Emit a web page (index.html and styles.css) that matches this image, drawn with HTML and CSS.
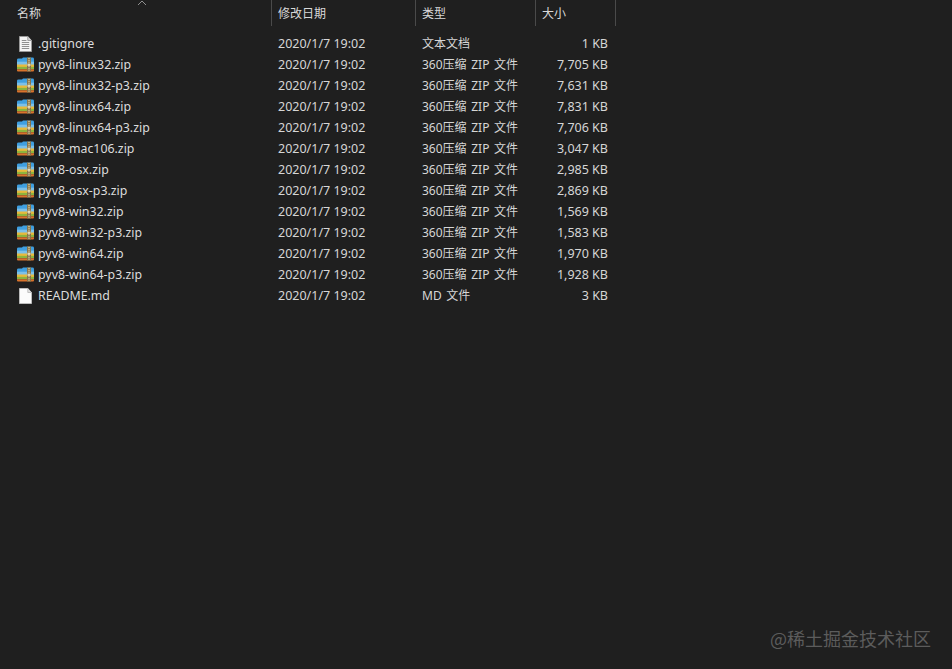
FILE: index.html
```html
<!DOCTYPE html>
<html lang="zh-CN">
<head>
<meta charset="utf-8">
<title>pyv8</title>
<link rel="stylesheet" href="styles.css">
</head>
<body>
<svg width="0" height="0" class="defs">
  <defs>
    <symbol id="zip" viewBox="0 0 17 16" preserveAspectRatio="none">
      <path d="M0 3 Q0 1.500 1.500 1.500 L5 1.500 L6 0.500 L15.500 0.500 Q17 0.500 17 2 L17 6 L0 6Z" fill="#3f9fe0"/>
      <rect x="0" y="5" width="17" height="4" fill="#7cc0e8"/>
      <rect x="0" y="8" width="17" height="3" fill="#e8b93c"/>
      <rect x="0" y="10.500" width="17" height="2.500" fill="#8db43e"/>
      <path d="M0 13 L17 13 L17 14.500 Q17 15.500 16 15.500 L1 15.500 Q0 15.500 0 14.500Z" fill="#d9732c"/>
      <rect x="10" y="0.500" width="4" height="15" fill="#85734a"/>
      <path d="M11 1.500h2M11 3.500h2M11 5.500h2M11 10h2M11 12h2M11 14h2" stroke="#c9b98a" stroke-width="1"/>
      <rect x="10.500" y="7" width="3" height="2.500" fill="#e7dcb8"/>
    </symbol>
    <symbol id="txt" viewBox="0 0 14 16" preserveAspectRatio="none">
      <path d="M0.500 0.500 H9.500 L13.500 4.500 V15.500 H0.500Z" fill="#f4f4f4" stroke="#9a9a9a"/>
      <path d="M9.500 0.500 V4.500 H13.500" fill="#d8d8d8" stroke="#9a9a9a"/>
      <path d="M3 4.500h5M3 6.500h8M3 8.500h8M3 10.500h8M3 12.500h8" stroke="#8a8a8a" stroke-width="1"/>
    </symbol>
    <symbol id="md" viewBox="0 0 14 16" preserveAspectRatio="none">
      <path d="M0.500 0.500 H9.500 L13.500 4.500 V15.500 H0.500Z" fill="#fbfbfb" stroke="#bdbdbd"/>
      <path d="M9.500 0.500 V4.500 H13.500" fill="#e2e2e2" stroke="#bdbdbd"/>
    </symbol>
  </defs>
</svg>
<div class="explorer">
  <div class="header">
    <svg class="sort" width="10" height="5" viewBox="0 0 10 5"><path d="M1 5 L5 1 L9 5" fill="none" stroke="#8f8f8f" stroke-width="1"/></svg>
    <div class="hcell c-name">名称</div>
    <div class="hcell c-date">修改日期</div>
    <div class="hcell c-type">类型</div>
    <div class="hcell c-size">大小</div>
  </div>
  <div class="list">
    <div class="row"><div class="c-name name"><span class="iconbox"><svg class="ico-doc" width="13" height="16"><use href="#txt"/></svg></span>.gitignore</div><div class="c-date">2020/1/7 19:02</div><div class="c-type">文本文档</div><div class="c-size num">1 KB</div></div>
    <div class="row"><div class="c-name name"><span class="iconbox"><svg width="17" height="15"><use href="#zip"/></svg></span>pyv8-linux32.zip</div><div class="c-date">2020/1/7 19:02</div><div class="c-type">360压缩 ZIP 文件</div><div class="c-size num">7,705 KB</div></div>
    <div class="row"><div class="c-name name"><span class="iconbox"><svg width="17" height="15"><use href="#zip"/></svg></span>pyv8-linux32-p3.zip</div><div class="c-date">2020/1/7 19:02</div><div class="c-type">360压缩 ZIP 文件</div><div class="c-size num">7,631 KB</div></div>
    <div class="row"><div class="c-name name"><span class="iconbox"><svg width="17" height="15"><use href="#zip"/></svg></span>pyv8-linux64.zip</div><div class="c-date">2020/1/7 19:02</div><div class="c-type">360压缩 ZIP 文件</div><div class="c-size num">7,831 KB</div></div>
    <div class="row"><div class="c-name name"><span class="iconbox"><svg width="17" height="15"><use href="#zip"/></svg></span>pyv8-linux64-p3.zip</div><div class="c-date">2020/1/7 19:02</div><div class="c-type">360压缩 ZIP 文件</div><div class="c-size num">7,706 KB</div></div>
    <div class="row"><div class="c-name name"><span class="iconbox"><svg width="17" height="15"><use href="#zip"/></svg></span>pyv8-mac106.zip</div><div class="c-date">2020/1/7 19:02</div><div class="c-type">360压缩 ZIP 文件</div><div class="c-size num">3,047 KB</div></div>
    <div class="row"><div class="c-name name"><span class="iconbox"><svg width="17" height="15"><use href="#zip"/></svg></span>pyv8-osx.zip</div><div class="c-date">2020/1/7 19:02</div><div class="c-type">360压缩 ZIP 文件</div><div class="c-size num">2,985 KB</div></div>
    <div class="row"><div class="c-name name"><span class="iconbox"><svg width="17" height="15"><use href="#zip"/></svg></span>pyv8-osx-p3.zip</div><div class="c-date">2020/1/7 19:02</div><div class="c-type">360压缩 ZIP 文件</div><div class="c-size num">2,869 KB</div></div>
    <div class="row"><div class="c-name name"><span class="iconbox"><svg width="17" height="15"><use href="#zip"/></svg></span>pyv8-win32.zip</div><div class="c-date">2020/1/7 19:02</div><div class="c-type">360压缩 ZIP 文件</div><div class="c-size num">1,569 KB</div></div>
    <div class="row"><div class="c-name name"><span class="iconbox"><svg width="17" height="15"><use href="#zip"/></svg></span>pyv8-win32-p3.zip</div><div class="c-date">2020/1/7 19:02</div><div class="c-type">360压缩 ZIP 文件</div><div class="c-size num">1,583 KB</div></div>
    <div class="row"><div class="c-name name"><span class="iconbox"><svg width="17" height="15"><use href="#zip"/></svg></span>pyv8-win64.zip</div><div class="c-date">2020/1/7 19:02</div><div class="c-type">360压缩 ZIP 文件</div><div class="c-size num">1,970 KB</div></div>
    <div class="row"><div class="c-name name"><span class="iconbox"><svg width="17" height="15"><use href="#zip"/></svg></span>pyv8-win64-p3.zip</div><div class="c-date">2020/1/7 19:02</div><div class="c-type">360压缩 ZIP 文件</div><div class="c-size num">1,928 KB</div></div>
    <div class="row"><div class="c-name name"><span class="iconbox"><svg class="ico-doc" width="13" height="16"><use href="#md"/></svg></span>README.md</div><div class="c-date">2020/1/7 19:02</div><div class="c-type">MD 文件</div><div class="c-size num">3 KB</div></div>
  </div>
</div>
<div class="watermark">@稀土掘金技术社区</div>
</body>
</html>
```
FILE: styles.css
```css
html, body {
  margin: 0;
  height: 100%;
  background: #1f1f1f;
  overflow: hidden;
}
body {
  position: relative;
  font-family: "Noto Sans", "Noto Sans CJK SC", sans-serif;
  font-size: 12.5px;
  color: #d6d6d6;
}
.defs { position: absolute; }
.explorer { width: 616px; }
.header {
  position: relative;
  display: flex;
  height: 26px;
  font-size: 12px;
  color: #d9d9d9;
}
.sort { position: absolute; left: 137px; top: 0; }
.hcell {
  display: flex;
  align-items: center;
  box-sizing: border-box;
  border-right: 1px solid #4a4a4a;
}
.c-name { width: 272px; box-sizing: border-box; }
.c-date { width: 144px; box-sizing: border-box; padding-left: 6px; }
.c-type { width: 120px; box-sizing: border-box; padding-left: 6px; font-size: 12px; word-spacing: 1.5px; }
.c-size { width: 80px; box-sizing: border-box; padding-left: 6px; }
.hcell.c-name { padding-left: 17px; }
.list { padding-top: 7px; }
.row {
  display: flex;
  align-items: center;
  height: 21px;
  line-height: 16px;
  white-space: nowrap;
}
.name { display: flex; align-items: center; color: #dcdcdc; font-size: 12.35px; }
.iconbox {
  display: flex;
  justify-content: center;
  width: 17px;
  margin-left: 17px;
  margin-right: 4px;
}
.num { text-align: right; padding-right: 8px; }
.watermark {
  position: absolute;
  right: 21px;
  bottom: 20px;
  font-size: 18px;
  line-height: 22px;
  color: #5c5c5c;
  font-family: "Noto Sans CJK SC", sans-serif;
}
```
